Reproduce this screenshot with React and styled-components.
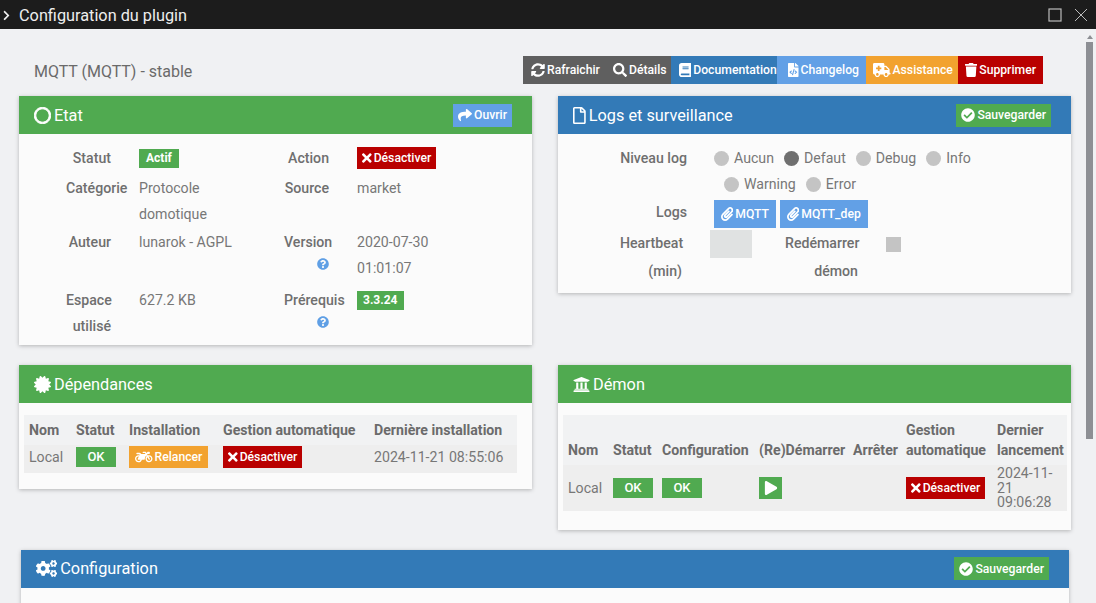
import React from 'react'
import styled, { createGlobalStyle } from 'styled-components'
import {
  FaAmbulance, FaBook, FaCertificate, FaCheckCircle, FaChevronRight, FaCogs, FaFileCode,
  FaMotorcycle, FaPaperclip, FaPlay, FaQuestionCircle, FaRegCircle, FaRegFile, FaSearch,
  FaShare, FaSyncAlt, FaTimes, FaTrash, FaUniversity,
} from 'react-icons/fa'

const tones = {
  grey: '#5f5f5f',
  blue: '#337ab7',
  sky: '#62a0e6',
  orange: '#f2a22f',
  red: '#b90000',
  green: '#50aa50',
}

// react-icons draws every glyph in a 1em square, these keep the glyph's own width
const natural = (Icon, ratio) => styled(Icon)`
  width: ${ratio}em;
`
const TimesIcon = natural(FaTimes, 0.6875)
const TrashIcon = natural(FaTrash, 0.875)
const BookIcon = natural(FaBook, 0.875)
const ClipIcon = natural(FaPaperclip, 0.875)
const CodeIcon = natural(FaFileCode, 0.75)
const FileIcon = natural(FaRegFile, 0.75)
const AmbulanceIcon = natural(FaAmbulance, 1.25)
const BikeIcon = natural(FaMotorcycle, 1.25)
const CogsIcon = natural(FaCogs, 1.25)

const GlobalStyle = createGlobalStyle`
  html, body { margin: 0; height: 100%; overflow: hidden; }
  body { font-family: Roboto, "Liberation Sans", sans-serif; font-size: 14.15px; color: #777; background: #f0f1f3; }
`

const Window = styled.div`
  display: flex;
  flex-direction: column;
  height: 603px;
`

const TitleBar = styled.header`
  display: flex;
  align-items: center;
  flex: 0 0 29px;
  padding: 1px 8px 0 1px;
  box-sizing: border-box;
  background: #1c1c1c;
  color: #eee;
  font-size: 16.3px;
`

const TitleText = styled.span`
  margin-left: 7px;
  flex: 1;
`

const WindowButtons = styled.div`
  display: flex;
  gap: 12px;
  color: #bbb;
`

const Body = styled.div`
  flex: 1;
  display: flex;
  min-height: 0;
`

const Content = styled.main`
  flex: 1;
  min-width: 0;
  overflow: hidden;
  padding: 27px 15px 0 19px;
`

const Scrollbar = styled.div`
  flex: 0 0 10px;
  padding-top: 6px;
`

const ScrollArrow = styled.div`
  width: 0;
  margin: 0 0 3px 1px;
  border: 3px solid transparent;
  border-top: 0;
  border-bottom: 4px solid #8d8f94;
`

const ScrollThumb = styled.div`
  width: 7px;
  height: 397px;
  background: #8d8f94;
`

const TopBar = styled.div`
  display: flex;
  align-items: center;
  justify-content: space-between;
  height: 28px;
  padding: 0 28px 0 15px;
  margin-bottom: 12px;
`

const PluginName = styled.h1`
  margin: 2px 0 0;
  font-size: 16px;
  font-weight: 400;
  color: #6a6a6a;
`

const ActionGroup = styled.div`
  display: flex;
`

const Btn = styled.span`
  display: inline-flex;
  align-items: center;
  justify-content: ${p => (p.$center ? 'center' : 'flex-start')};
  gap: 2px;
  box-sizing: border-box;
  height: ${p => p.$h || 22}px;
  width: ${p => (p.$w ? `${p.$w}px` : 'auto')};
  padding: 0 ${p => p.$pad ?? 5}px;
  background: ${p => tones[p.$tone]};
  color: #fff;
  font-size: 12.2px;
  font-weight: 500;
  white-space: nowrap;
  svg { font-size: 14px; flex: none; }
`

const StateBtn = styled(Btn)`
  vertical-align: top;
  margin-top: 2px;
`

const Columns = styled.div`
  display: grid;
  grid-template-columns: 513px 513px;
  column-gap: 26px;
  row-gap: 20px;
  align-items: start;
`

const Panel = styled.section`
  background: #fbfbfb;
  box-shadow: 0 1px 4px rgba(0, 0, 0, 0.25);
`

const WidePanel = styled(Panel)`
  grid-column: 1 / -1;
  margin: 0 2px;
`

const WidePanelBody = styled.div`
  height: 60px;
`

const PanelHead = styled.div`
  display: flex;
  align-items: center;
  justify-content: space-between;
  height: 38px;
  padding: 0 20px 0 15px;
  background: ${p => tones[p.$tone]};
  color: #fff;
`

const PanelTitle = styled.h3`
  display: flex;
  align-items: center;
  gap: 3px;
  margin: 0;
  font-size: 16.3px;
  font-weight: 400;
  svg { font-size: 17px; }
`

// the ring of the Etat panel is heavier than the stock outline
const Ring = styled(FaRegCircle)`
  stroke: currentColor;
  stroke-width: 30;
`

const StateGrid = styled.div`
  display: grid;
  grid-template-columns: 45px 117px 45px 117px;
  grid-template-rows: 30px 54px 58px 54px;
  column-gap: 28px;
  padding: 11px 0 4px 47px;
  line-height: 26px;
`

const Label = styled.div`
  width: ${p => (p.$w ? `${p.$w}px` : 'auto')};
  margin-left: ${p => p.$ml || 0}px;
  flex: none;
  text-align: right;
  font-weight: 500;
  color: #6f6f6f;
  line-height: ${p => p.$lh || 26}px;
`

const Help = styled(FaQuestionCircle)`
  display: block;
  margin: 3px 0 0 auto;
  color: #5f9fe5;
  font-size: 12px;
`

const Badge = styled.span`
  display: inline-block;
  height: 19px;
  padding: 0 ${p => p.$pad ?? 7}px;
  background: ${tones.green};
  color: #fff;
  font-size: 12px;
  font-weight: 700;
  line-height: 19px;
  vertical-align: 1px;
`

const LogsBody = styled.div`
  display: flex;
  flex-direction: column;
  padding: 11px 0 8px 62px;
  line-height: 26px;
`

const FormRow = styled.div`
  display: flex;
  align-items: flex-start;
  gap: ${p => p.$gap || 28}px;
  margin-top: ${p => p.$top || 0}px;
`

const RadioLines = styled.div`
  display: flex;
  flex-direction: column;
`

const RadioLine = styled.div`
  display: flex;
  gap: 10px;
  padding-left: ${p => (p.$indent ? 10 : 0)}px;
`

const Radio = styled.span`
  display: inline-flex;
  align-items: center;
  gap: 5px;
  &::before {
    content: '';
    width: 15px;
    height: 15px;
    border-radius: 50%;
    background: ${p => (p.$on ? '#6f6f6f' : '#c4c4c4')};
  }
`

const LinkGroup = styled.div`
  display: flex;
  gap: 4px;
  padding-top: 1px;
`

const HeartbeatInput = styled.div`
  flex: none;
  width: 42px;
  height: 28px;
  margin-top: 1px;
  background: #e0e2e2;
`

const Check = styled.div`
  flex: none;
  width: 15px;
  height: 15px;
  margin-top: 8px;
  background: #c4c4c4;
`

const TableWrap = styled.div`
  padding: 12px ${p => p.$right}px ${p => p.$bottom}px 5px;
`

const Table = styled.table`
  width: 100%;
  table-layout: fixed;
  border-collapse: collapse;
  background: #f1f2f3;
  th {
    padding: 5px;
    color: #6b6b6b;
    font-weight: 700;
    line-height: 20px;
    text-align: left;
    vertical-align: bottom;
    white-space: ${p => (p.$wrap ? 'normal' : 'nowrap')};
  }
  td {
    padding: 1px 5px ${p => p.$cellBottom}px;
    background: #eee;
    line-height: 14.5px;
    vertical-align: middle;
  }
`

const Col = styled.col`
  width: ${p => p.$w}px;
`

const StatusCell = styled.span`
  display: inline-flex;
  align-items: center;
  justify-content: center;
  width: 40px;
  height: 20px;
  background: ${tones.green};
  color: #fff;
  font-size: 13px;
  font-weight: 500;
  vertical-align: middle;
`

const App = () => (
  <Window>
    <GlobalStyle />
    <TitleBar>
      <FaChevronRight size={11} />
      <TitleText>Configuration du plugin</TitleText>
      <WindowButtons>
        <svg width="14" height="14" viewBox="0 0 14 14" fill="none" stroke="currentColor" strokeWidth="1.2">
          <rect x="1" y="1" width="12" height="12" />
        </svg>
        <svg width="14" height="14" viewBox="0 0 14 14" fill="none" stroke="currentColor" strokeWidth="1">
          <path d="M1 1l12 12M13 1L1 13" />
        </svg>
      </WindowButtons>
    </TitleBar>
    <Body>
      <Content>
        <TopBar>
          <PluginName>MQTT (MQTT) - stable</PluginName>
          <ActionGroup>
            <Btn $tone="grey" $h={28} $pad={8} $w={83}><FaSyncAlt />Rafraichir</Btn>
            <Btn $tone="grey" $h={28} $pad={7} $w={65}><FaSearch />Détails</Btn>
            <Btn $tone="blue" $h={28} $pad={8} $w={106}><BookIcon />Documentation</Btn>
            <Btn $tone="sky" $h={28} $pad={11} $w={89}><CodeIcon />Changelog</Btn>
            <Btn $tone="orange" $h={28} $pad={7} $w={92}><AmbulanceIcon />Assistance</Btn>
            <Btn $tone="red" $h={28} $pad={7} $w={85}><TrashIcon />Supprimer</Btn>
          </ActionGroup>
        </TopBar>
        <Columns>
          <Panel>
            <PanelHead $tone="green">
              <PanelTitle><Ring />Etat</PanelTitle>
              <Btn $tone="sky" $h={23}><FaShare />Ouvrir</Btn>
            </PanelHead>
            <StateGrid>
              <Label>Statut</Label>
              <div><Badge>Actif</Badge></div>
              <Label>Action</Label>
              <div><StateBtn $tone="red"><TimesIcon />Désactiver</StateBtn></div>
              <Label>Catégorie</Label>
              <div>Protocole domotique</div>
              <Label>Source</Label>
              <div>market</div>
              <Label>Auteur</Label>
              <div>lunarok - AGPL</div>
              <Label>Version<Help /></Label>
              <div>2020-07-30 01:01:07</div>
              <Label>Espace utilisé</Label>
              <div>627.2 KB</div>
              <Label>Prérequis<Help /></Label>
              <div><Badge $pad={6}>3.3.24</Badge></div>
            </StateGrid>
          </Panel>
          <Panel>
            <PanelHead $tone="blue">
              <PanelTitle><FileIcon />Logs et surveillance</PanelTitle>
              <Btn $tone="green" $h={23}><FaCheckCircle />Sauvegarder</Btn>
            </PanelHead>
            <LogsBody>
              <FormRow $gap={27}>
                <Label $w={67}>Niveau log</Label>
                <RadioLines>
                  <RadioLine>
                    <Radio>Aucun</Radio>
                    <Radio $on>Defaut</Radio>
                    <Radio>Debug</Radio>
                    <Radio>Info</Radio>
                  </RadioLine>
                  <RadioLine $indent>
                    <Radio>Warning</Radio>
                    <Radio>Error</Radio>
                  </RadioLine>
                </RadioLines>
              </FormRow>
              <FormRow $top={2} $gap={27}>
                <Label $w={67}>Logs</Label>
                <LinkGroup>
                  <Btn $tone="sky" $h={28} $pad={7}><ClipIcon />MQTT</Btn>
                  <Btn $tone="sky" $h={28} $pad={7}><ClipIcon />MQTT_dep</Btn>
                </LinkGroup>
              </FormRow>
              <FormRow $top={1}>
                <Label $w={62} $lh={28}>Heartbeat (min)</Label>
                <HeartbeatInput />
                <Label $w={73} $lh={28} $ml={5}>Redémarrer démon</Label>
                <Check />
              </FormRow>
            </LogsBody>
          </Panel>
          <Panel>
            <PanelHead $tone="green">
              <PanelTitle><FaCertificate />Dépendances</PanelTitle>
            </PanelHead>
            <TableWrap $right={15} $bottom={16}>
              <Table $cellBottom={5}>
                <colgroup>
                  <Col $w={47} />
                  <Col $w={53} />
                  <Col $w={94} />
                  <Col $w={151} />
                  <Col $w={148} />
                </colgroup>
                <thead>
                  <tr>
                    <th>Nom</th>
                    <th>Statut</th>
                    <th>Installation</th>
                    <th>Gestion automatique</th>
                    <th>Dernière installation</th>
                  </tr>
                </thead>
                <tbody>
                  <tr>
                    <td>Local</td>
                    <td><StatusCell>OK</StatusCell></td>
                    <td><Btn $tone="orange" $pad={6}><BikeIcon />Relancer</Btn></td>
                    <td><Btn $tone="red"><TimesIcon />Désactiver</Btn></td>
                    <td>2024-11-21 08:55:06</td>
                  </tr>
                </tbody>
              </Table>
            </TableWrap>
          </Panel>
          <Panel>
            <PanelHead $tone="green">
              <PanelTitle><FaUniversity />Démon</PanelTitle>
            </PanelHead>
            <TableWrap $right={4} $bottom={19}>
              <Table $wrap $cellBottom={1}>
                <colgroup>
                  <Col $w={45} />
                  <Col $w={49} />
                  <Col $w={97} />
                  <Col $w={94} />
                  <Col $w={53} />
                  <Col $w={91} />
                  <Col $w={75} />
                </colgroup>
                <thead>
                  <tr>
                    <th>Nom</th>
                    <th>Statut</th>
                    <th>Configuration</th>
                    <th>(Re)Démarrer</th>
                    <th>Arrêter</th>
                    <th>Gestion automatique</th>
                    <th>Dernier lancement</th>
                  </tr>
                </thead>
                <tbody>
                  <tr>
                    <td>Local</td>
                    <td><StatusCell>OK</StatusCell></td>
                    <td><StatusCell>OK</StatusCell></td>
                    <td><Btn $tone="green" $w={23} $pad={0} $center><FaPlay /></Btn></td>
                    <td></td>
                    <td><Btn $tone="red"><TimesIcon />Désactiver</Btn></td>
                    <td>2024-11-21 09:06:28</td>
                  </tr>
                </tbody>
              </Table>
            </TableWrap>
          </Panel>
          <WidePanel>
            <PanelHead $tone="blue">
              <PanelTitle><CogsIcon />Configuration</PanelTitle>
              <Btn $tone="green" $h={23}><FaCheckCircle />Sauvegarder</Btn>
            </PanelHead>
            <WidePanelBody />
          </WidePanel>
        </Columns>
      </Content>
      <Scrollbar>
        <ScrollArrow />
        <ScrollThumb />
      </Scrollbar>
    </Body>
  </Window>
)

export default App
